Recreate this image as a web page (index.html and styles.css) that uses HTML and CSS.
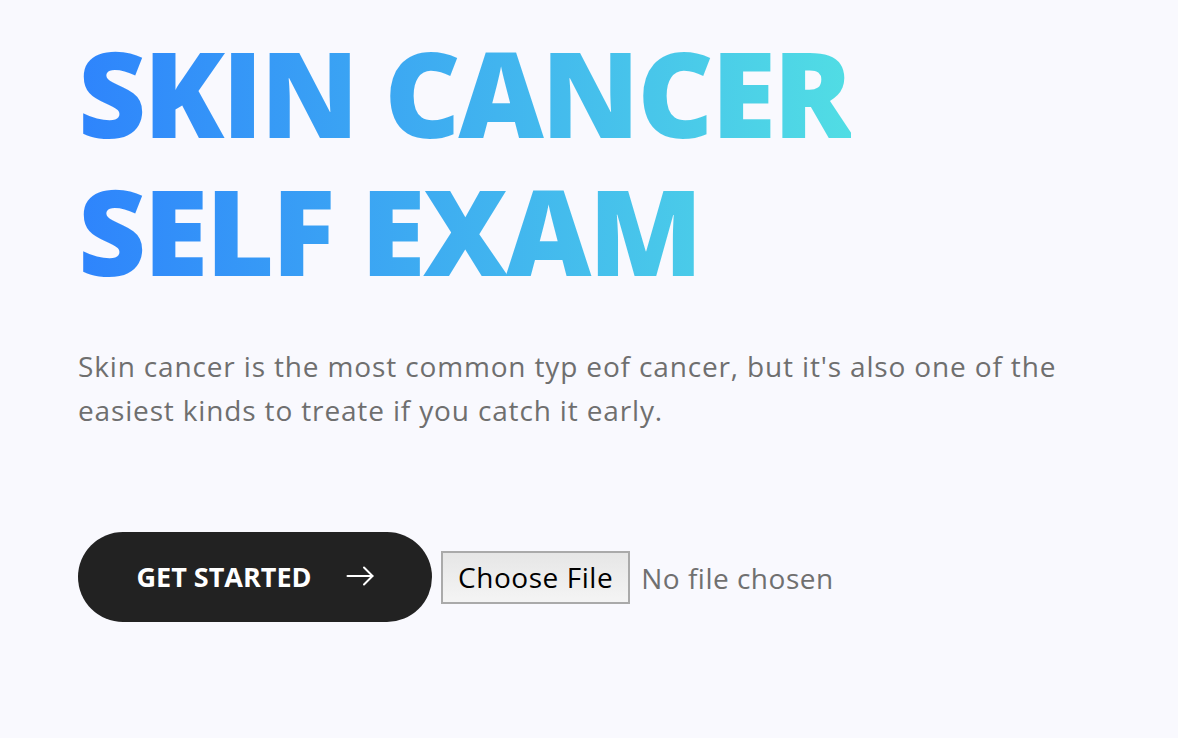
FILE: index.html
```html
<!DOCTYPE html>
<html lang="en">
<head>
<meta charset="utf-8">
<title>Skin Cancer Self Exam</title>
<link rel="stylesheet" href="styles.css">
</head>
<body>
<main class="hero">
  <h1 class="hero-title">SKIN CANCER<br>SELF EXAM</h1>
  <p class="hero-text">Skin cancer is the most common typ eof cancer, but it's also one of the easiest kinds to treate if you catch it early.</p>
  <div class="hero-actions">
    <button class="btn-start" type="button">
      <span class="btn-label">GET STARTED</span>
      <svg class="btn-arrow" width="28" height="20" viewBox="0 0 28 20" fill="none" stroke="#ffffff" stroke-width="2" stroke-linecap="round" stroke-linejoin="round">
        <path d="M1.5 10H26.5"/>
        <path d="M18 1.5L26.5 10L18 18.5"/>
      </svg>
    </button>
    <input class="file-input" type="file">
  </div>
</main>
</body>
</html>
```
FILE: styles.css
```css
html, body {
  margin: 0;
  padding: 0;
}
body {
  background: #f9f9fe;
  font-family: "Open Sans", "Liberation Sans", sans-serif;
  min-height: 738px;
}
.hero {
  padding: 24px 0 0 78px;
  display: flex;
  flex-direction: column;
  align-items: flex-start;
}
.hero-title {
  margin: 0;
  font-family: "Open Sans", sans-serif;
  font-weight: 800;
  font-size: 118px;
  line-height: 138px;
  letter-spacing: -2.6px;
  display: inline-block;
  background: linear-gradient(90deg, #2e84fc 0%, #51dde4 100%);
  -webkit-background-clip: text;
  background-clip: text;
  color: transparent;
  -webkit-text-fill-color: transparent;
}
.hero-text {
  margin: 44px 0 0 0;
  width: 1010px;
  font-size: 28px;
  line-height: 44px;
  letter-spacing: 0.85px;
  color: #6f6f6f;
  font-weight: 400;
}
.hero-actions {
  margin-top: 100px;
  display: flex;
  align-items: center;
  gap: 9px;
}
.btn-start {
  width: 354px;
  height: 90px;
  border: none;
  border-radius: 45px;
  background: #222222;
  color: #ffffff;
  display: flex;
  align-items: center;
  justify-content: center;
  gap: 34px;
  font-family: "Open Sans", sans-serif;
  font-weight: 700;
  font-size: 27px;
  line-height: 1;
  padding: 0 0 2px 0;
  cursor: pointer;
}
.btn-label {
  letter-spacing: 0;
}
.btn-arrow {
  display: block;
}
.file-input {
  font-family: "Open Sans", sans-serif;
  font-size: 28px;
  letter-spacing: 0.5px;
  color: #707070;
}
.file-input::file-selector-button {
  font-family: "Open Sans", sans-serif;
  font-size: 28px;
  letter-spacing: 0.55px;
  color: #000000;
  height: 53px;
  padding: 0 15px;
  margin: 0 11px 0 0;
  border: 2px solid #aaaaaa;
  border-radius: 0;
  background: linear-gradient(#e6e6e6, #f4f4f4);
}
```
